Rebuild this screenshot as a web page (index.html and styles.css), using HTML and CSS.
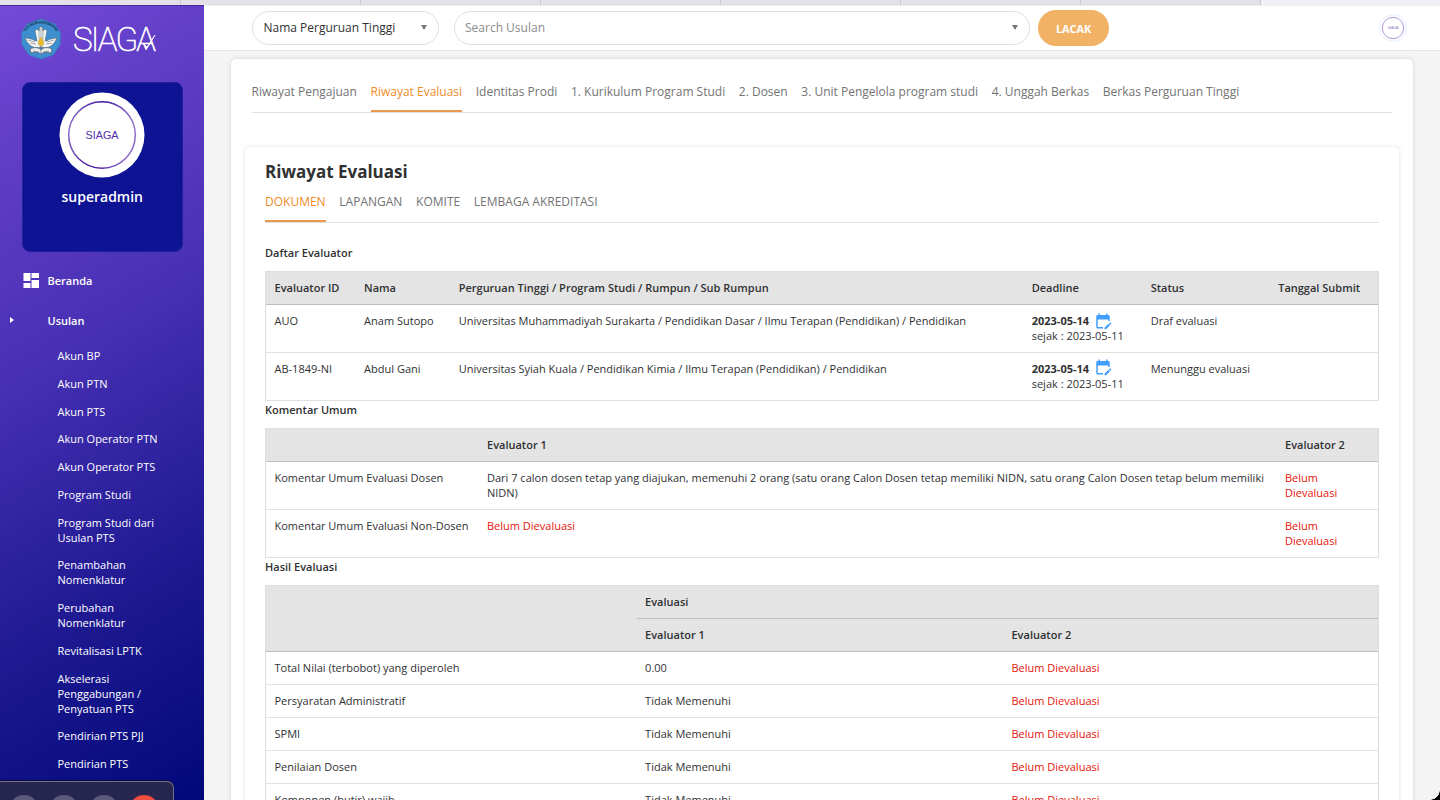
FILE: index.html
```html
<!DOCTYPE html>
<html lang="id">
<head>
<meta charset="utf-8">
<title>SIAGA - Riwayat Evaluasi</title>
<link rel="stylesheet" href="styles.css">
</head>
<body>
<svg class="defs" width="0" height="0">
  <symbol id="edit-calendar" viewBox="0 0 24 24"><path d="M5 10h14v2h2V6c0-1.1-.9-2-2-2h-1V2h-2v2H8V2H6v2H5c-1.1 0-2 .9-2 2v14c0 1.1.9 2 2 2h7v-2H5V10zm17.8 4.9-.7-.7c-.4-.4-1-.4-1.4 0l-.7.7 2.1 2.1.7-.7c.4-.4.4-1 0-1.4zM14 20.9V23h2.1l5.3-5.3-2.1-2.1z" fill="#409eff"/></symbol>
</svg>
<div class="browser-strip"><i></i><i></i><i></i><i></i><i></i><i></i><i></i><i class="current"></i></div>
<div class="app">
  <aside class="sidebar">
    <div class="brand">
      <svg class="emblem" viewBox="0 0 42 42" width="42" height="42">
        <path d="M21 1 35 6 40.500 15 40 27 33 37 21 41 9 37 2 27 1.500 15 7 6z" fill="#3d8fd0" stroke="#3779be" stroke-width=".8" stroke-linejoin="round"/>
        <path id="arc" d="M5.500 15C10 2.500 32 2.500 36.500 15" fill="none"/>
        <text class="motto"><textPath href="#arc" startOffset="1" textLength="36">TUT WURI HANDAYANI</textPath></text>
        <path d="M21 29C15 31 8 29 5 19c2 2 4 1 6 2 2 0 3 2 6 2l-2-10 2-2 2 2 .5-4h3l.5 4 2-2 2 2-2 10c3 0 4-2 6-2 2-1 4 0 6-2C34 29 27 31 21 29z" fill="#f5f7f7" stroke="#50606c" stroke-width=".6"/>
        <path d="M19 11v10m2-11v9m2-8v10M8 22l7 2m19-2-7 2M10 25l6 1m16-1-6 1" stroke="#7c8790" stroke-width=".7"/>
        <path d="M21 19c4 5 3 9 0 9s-4-4 0-9z" fill="#edbd28" stroke="#80795c" stroke-width=".4"/>
        <path d="M10 31c4-2 8-2 11 1 3-3 7-3 11-1l-1 4c-4-1-7-1-10 1-3-2-6-2-10-1z" fill="#eceff0" stroke="#475462" stroke-width=".7"/>
        <path d="M21 28v8M13 33l6 1m10-1-6 1" stroke="#66717a" stroke-width=".7"/>
      </svg>
      <svg class="wordmark" viewBox="0 0 92 40" width="92" height="40">
        <text x="0" y="32" textLength="83" lengthAdjust="spacing">SIAGA</text>
        <path d="m70 24 4 4 8-12-9 15z" fill="#fff" stroke="#fff" stroke-width=".8"/>
      </svg>
    </div>
    <section class="profile">
      <svg viewBox="0 0 86 86" width="86" height="86">
        <defs><linearGradient id="ring" x2="1" y2=".15"><stop stop-color="#8d6dca"/><stop offset=".5" stop-color="#4312a0"/><stop offset="1" stop-color="#8d6dca"/></linearGradient></defs>
        <circle cx="43" cy="43" r="42.500" fill="#fff"/>
        <circle cx="43" cy="43" r="33.300" fill="none" stroke="url(#ring)" stroke-width="1.500"/>
        <text class="avatar-text" x="43" y="47" text-anchor="middle">SIAGA</text>
      </svg>
      <strong>superadmin</strong>
    </section>
    <nav>
      <a class="main-link beranda"><svg viewBox="0 0 16 16" width="16" height="16"><path d="M.5 1h7v8h-7zm8 0H16v5H8.500zM.5 11h7v5h-7zm8-3H16v8H8.500z" fill="#fff"/></svg>Beranda</a>
      <a class="main-link usulan"><b class="caret"></b>Usulan</a>
      <div class="submenu">
        <a>Akun BP</a><a>Akun PTN</a><a>Akun PTS</a><a>Akun Operator PTN</a><a>Akun Operator PTS</a><a>Program Studi</a><a>Program Studi dari<br>Usulan PTS</a><a>Penambahan<br>Nomenklatur</a><a>Perubahan<br>Nomenklatur</a><a>Revitalisasi LPTK</a><a>Akselerasi<br>Penggabungan /<br>Penyatuan PTS</a><a>Pendirian PTS PJJ</a><a>Pendirian PTS</a>
      </div>
    </nav>
  </aside>
  <div class="page">
    <header>
      <div class="select kind">Nama Perguruan Tinggi<b class="arrow"></b></div>
      <div class="select search">Search Usulan<b class="arrow"></b></div>
      <button>LACAK</button>
      <svg class="user" viewBox="0 0 28 28" width="28" height="28">
        <circle cx="14" cy="14" r="13.300" fill="none" stroke="#dcecff" stroke-width=".8"/>
        <circle cx="14" cy="14" r="10.700" fill="none" stroke="#a78bd8" stroke-width=".9"/>
        <text class="user-text" x="14" y="15.200" text-anchor="middle">SIAGA</text>
      </svg>
    </header>
    <main>
      <div class="tabs top-tabs"><a>Riwayat Pengajuan</a><a class="active">Riwayat Evaluasi</a><a>Identitas Prodi</a><a>1. Kurikulum Program Studi</a><a>2. Dosen</a><a>3. Unit Pengelola program studi</a><a>4. Unggah Berkas</a><a>Berkas Perguruan Tinggi</a></div>
      <section class="panel">
        <h1>Riwayat Evaluasi</h1>
        <div class="tabs"><a class="active">DOKUMEN</a><a>LAPANGAN</a><a>KOMITE</a><a>LEMBAGA AKREDITASI</a></div>
        <h2 class="first">Daftar Evaluator</h2>
        <table>
          <colgroup><col class="c-id"><col class="c-nama"><col class="c-pt"><col class="c-deadline"><col class="c-status"><col></colgroup>
          <thead><tr><th>Evaluator ID</th><th>Nama</th><th>Perguruan Tinggi / Program Studi / Rumpun / Sub Rumpun</th><th>Deadline</th><th>Status</th><th>Tanggal Submit</th></tr></thead>
          <tbody>
            <tr><td>AUO</td><td>Anam Sutopo</td><td>Universitas Muhammadiyah Surakarta / Pendidikan Dasar / Ilmu Terapan (Pendidikan) / Pendidikan</td><td><span class="due"><strong>2023-05-14</strong><svg width="18" height="18"><use href="#edit-calendar"/></svg></span>sejak : 2023-05-11</td><td>Draf evaluasi</td><td></td></tr>
            <tr><td>AB-1849-NI</td><td>Abdul Gani</td><td>Universitas Syiah Kuala / Pendidikan Kimia / Ilmu Terapan (Pendidikan) / Pendidikan</td><td><span class="due raised"><strong>2023-05-14</strong><svg width="18" height="18"><use href="#edit-calendar"/></svg></span>sejak : 2023-05-11</td><td>Menunggu evaluasi</td><td></td></tr>
          </tbody>
        </table>
        <h2>Komentar Umum</h2>
        <table>
          <colgroup><col class="c-topic"><col class="c-comment"><col></colgroup>
          <thead><tr><th></th><th>Evaluator 1</th><th>Evaluator 2</th></tr></thead>
          <tbody>
            <tr><td>Komentar Umum Evaluasi Dosen</td><td>Dari 7 calon dosen tetap yang diajukan, memenuhi 2 orang (satu orang Calon Dosen tetap memiliki NIDN, satu orang Calon Dosen tetap belum memiliki<br>NIDN)</td><td class="pending">Belum<br>Dievaluasi</td></tr>
            <tr><td>Komentar Umum Evaluasi Non-Dosen</td><td class="pending">Belum Dievaluasi</td><td class="pending">Belum<br>Dievaluasi</td></tr>
          </tbody>
        </table>
        <h2>Hasil Evaluasi</h2>
        <table>
          <colgroup><col class="c-item"><col class="c-score"><col></colgroup>
          <thead><tr><th rowspan="2"></th><th colspan="2">Evaluasi</th></tr><tr><th>Evaluator 1</th><th>Evaluator 2</th></tr></thead>
          <tbody>
            <tr><td>Total Nilai (terbobot) yang diperoleh</td><td>0.00</td><td class="pending">Belum Dievaluasi</td></tr>
            <tr><td>Persyaratan Administratif</td><td>Tidak Memenuhi</td><td class="pending">Belum Dievaluasi</td></tr>
            <tr><td>SPMI</td><td>Tidak Memenuhi</td><td class="pending">Belum Dievaluasi</td></tr>
            <tr><td>Penilaian Dosen</td><td>Tidak Memenuhi</td><td class="pending">Belum Dievaluasi</td></tr>
            <tr><td>Komponen (butir) wajib</td><td>Tidak Memenuhi</td><td class="pending">Belum Dievaluasi</td></tr>
          </tbody>
        </table>
      </section>
    </main>
  </div>
</div>
<div class="call-bar"><i></i><i></i><i></i><i class="hangup"></i></div>
<div class="screen-corner"></div>
</body>
</html>
```
FILE: styles.css
```css
* { box-sizing: border-box; }
html { height: 800px; overflow: hidden; }
body { margin: 0; height: 800px; overflow: hidden; display: flex; flex-direction: column; background: #f4f4f4; font: 11px/15px "Open Sans", sans-serif; color: #303133; }
.defs { position: absolute; }
.browser-strip { flex: none; height: 5px; display: flex; background: #e4e2e8; }
.browser-strip i { width: 180px; flex: none; border-right: 1px solid #cbc9cf; }
.browser-strip i:first-child { width: 181px; }
.browser-strip .current { background: #f2f0f7; }
.app { display: flex; flex: 1; min-height: 0; overflow: hidden; }
.sidebar { width: 204px; flex: none; height: 795px; overflow: hidden; background: linear-gradient(149deg, #7549d8 0%, #6440c9 13%, #4931b5 40%, #211b94 70%, #000878 100%); border-top: 1px solid #4527a0; color: #fff; }
.brand { height: 75.5px; display: flex; padding: 12px 0 0 19.5px; }
.emblem { flex: none; }
.wordmark { margin: 1px 0 0 11px; }
.wordmark text { font: 100 33px Roboto, sans-serif; fill: #fff; stroke: #fff; stroke-width: .7px; }
.motto { font: bold 4px "Open Sans", sans-serif; fill: #173b5a; }
.profile { margin: 0 21px 0 21.5px; height: 170px; border-radius: 8px; background: #0e1393; border: 1px solid #20209d; display: flex; flex-direction: column; align-items: center; padding-top: 9.5px; }
.profile strong { font-size: 14px; line-height: 20px; font-weight: 600; margin-top: 9px; }
.avatar-text { font: 10.8px "Liberation Sans", sans-serif; fill: #512da8; }
.main-link { display: flex; align-items: center; height: 40px; font-weight: 600; }
.beranda { margin-top: 8.5px; padding-left: 22.5px; gap: 9px; }
.usulan { padding-left: 10px; gap: 33.5px; }
.caret { border: solid transparent; border-width: 3.5px 0 3.5px 4px; border-left-color: #fff; }
.submenu { display: flex; flex-direction: column; gap: 12.75px; padding: 8px 0 0 57.5px; font-weight: 500; }
.page { flex: 1; min-width: 0; }
header { height: 46px; display: flex; align-items: center; background: #fff; border-top: 1px solid #eee; border-bottom: 1px solid #e4e4e4; padding: 0 0 1px 48px; font-size: 12px; }
.select { height: 34px; border: 1px solid #e0e0e0; border-radius: 17px; display: flex; align-items: center; justify-content: space-between; padding: 0 11px 1px 10px; }
.kind { width: 187px; margin-right: 15px; padding-left: 10.5px; }
.search { width: 576px; color: #8c8c8c; }
.arrow { border: solid transparent; border-width: 5px 3.5px 0; border-top-color: #777; margin-top: 1px; }
header button { width: 71px; height: 36px; margin-left: 8px; padding: 1px 0 0; border: 0; border-radius: 18px; background: #f1b266; color: #fff; font: 700 11px "Open Sans", sans-serif; letter-spacing: -.1px; }
.user { margin-left: auto; margin-right: 33.5px; }
.user-text { font: 3.500px "Liberation Sans", sans-serif; fill: #8e72c5; }
main { margin: 8px 27px 0; height: 800px; background: #fff; border-radius: 5px; box-shadow: 0 0 4px #0002; }
.tabs { display: flex; gap: 13.7px; border-bottom: 1px solid #e1e1e1; font-size: 12px; line-height: 16px; color: #737373; white-space: nowrap; }
.tabs a { height: 28px; }
.tabs .active { color: #f08c28; border-bottom: 2px solid #ea9a4c; }
.top-tabs { margin: 0 21px 0 20.5px; padding-top: 25px; height: 54px; gap: 13.6px; }
.panel { margin: 34px 14px 0; padding: 15px 20px 0; height: 700px; background: #fff; border-radius: 5px; box-shadow: 0 0 4px #0002; }
h1 { margin: 0 0 12px; font-size: 17px; line-height: 20px; font-weight: 700; }
h2 { margin: 0; height: 27px; padding-top: 1px; font-size: 11px; line-height: 15px; font-weight: 600; }
h2.first { margin-top: 22px; height: 26px; padding: 0; }
table { width: 1114px; table-layout: fixed; border: solid #dedede; border-width: 1px 1px 0; border-spacing: 0; }
th, td { height: 33px; padding: 8px 0 9px 8.5px; border-bottom: 1px solid #e1e1e1; text-align: left; vertical-align: top; white-space: nowrap; }
th { background: #e4e4e4; border-color: #bebebe; font-weight: 600; }
.pending { color: #e6140a; }
.c-id { width: 89.6px; } .c-nama { width: 94.600px; } .c-pt { width: 573px; } .c-deadline { width: 119px; } .c-status { width: 127.500px; }
.c-topic { width: 212.500px; } .c-comment { width: 798px; }
.c-item { width: 370.6px; } .c-score { width: 366.4px; }
.due { display: flex; height: 15px; gap: 5px; }
.due svg { flex: none; margin-top: -1px; }
.due.raised svg { margin-top: -3px; }
.call-bar { position: absolute; left: 0; bottom: 0; width: 174px; height: 19px; border: solid #71718a; border-width: 1px 1px 0 0; border-radius: 0 7px 0 0; background: #27264f; box-shadow: 0 -1px 1px #0a0a40; display: flex; gap: 10px; padding: 13px 0 0 9px; overflow: hidden; }
.call-bar i { flex: none; width: 30px; height: 30px; border-radius: 50%; background: #5d5b7c; }
.call-bar .hangup { background: #f04e3e; }
.screen-corner { position: absolute; right: 0; bottom: 0; width: 10px; height: 10px; background: radial-gradient(circle at 0 0, transparent 9.500px, #000 10px); }
```
